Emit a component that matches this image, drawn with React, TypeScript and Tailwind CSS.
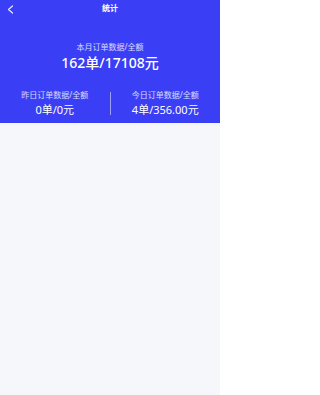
const font = { fontFamily: '"Noto Sans", "Noto Sans CJK SC", sans-serif' };

function Stat({ label, value }: { label: string; value: string }) {
  return (
    <div className="flex-1 flex flex-col items-center">
      <p className="text-[8px] leading-[10px] text-white/80">{label}</p>
      <p className="text-[11px] leading-[14px] mt-[3px] text-white">{value}</p>
    </div>
  );
}

export default function App() {
  return (
    <div className="w-[220px] h-[395px] bg-[#f6f7fb] flex flex-col" style={font}>
      <div className="bg-[#3a3ef5] h-[123px] flex flex-col">
        <div className="h-[16px] flex items-center justify-between px-[7px]">
          <svg width="7" height="9" viewBox="0 0 7 9" className="mt-[2px]">
            <polyline points="5.5,1 1.5,4.5 5.5,8" fill="none" stroke="white" strokeOpacity="0.9" strokeWidth="1.2" strokeLinecap="round" strokeLinejoin="round" />
          </svg>
          <span className="text-[8px] font-bold text-white">统计</span>
          <span className="w-[7px]" />
        </div>
        <div className="flex flex-col items-center mt-[26px]">
          <p className="text-[8px] leading-[10px] text-white/80">本月订单数据/全额</p>
          <p className="text-[14px] leading-[18px] mt-[2px] text-white font-medium">162单/17108元</p>
        </div>
        <div className="flex items-center mt-[18px]">
          <Stat label="昨日订单数据/全额" value="0单/0元" />
          <div className="w-px h-[23px] bg-white/50" />
          <Stat label="今日订单数据/全额" value="4单/356.00元" />
        </div>
      </div>
    </div>
  );
}
